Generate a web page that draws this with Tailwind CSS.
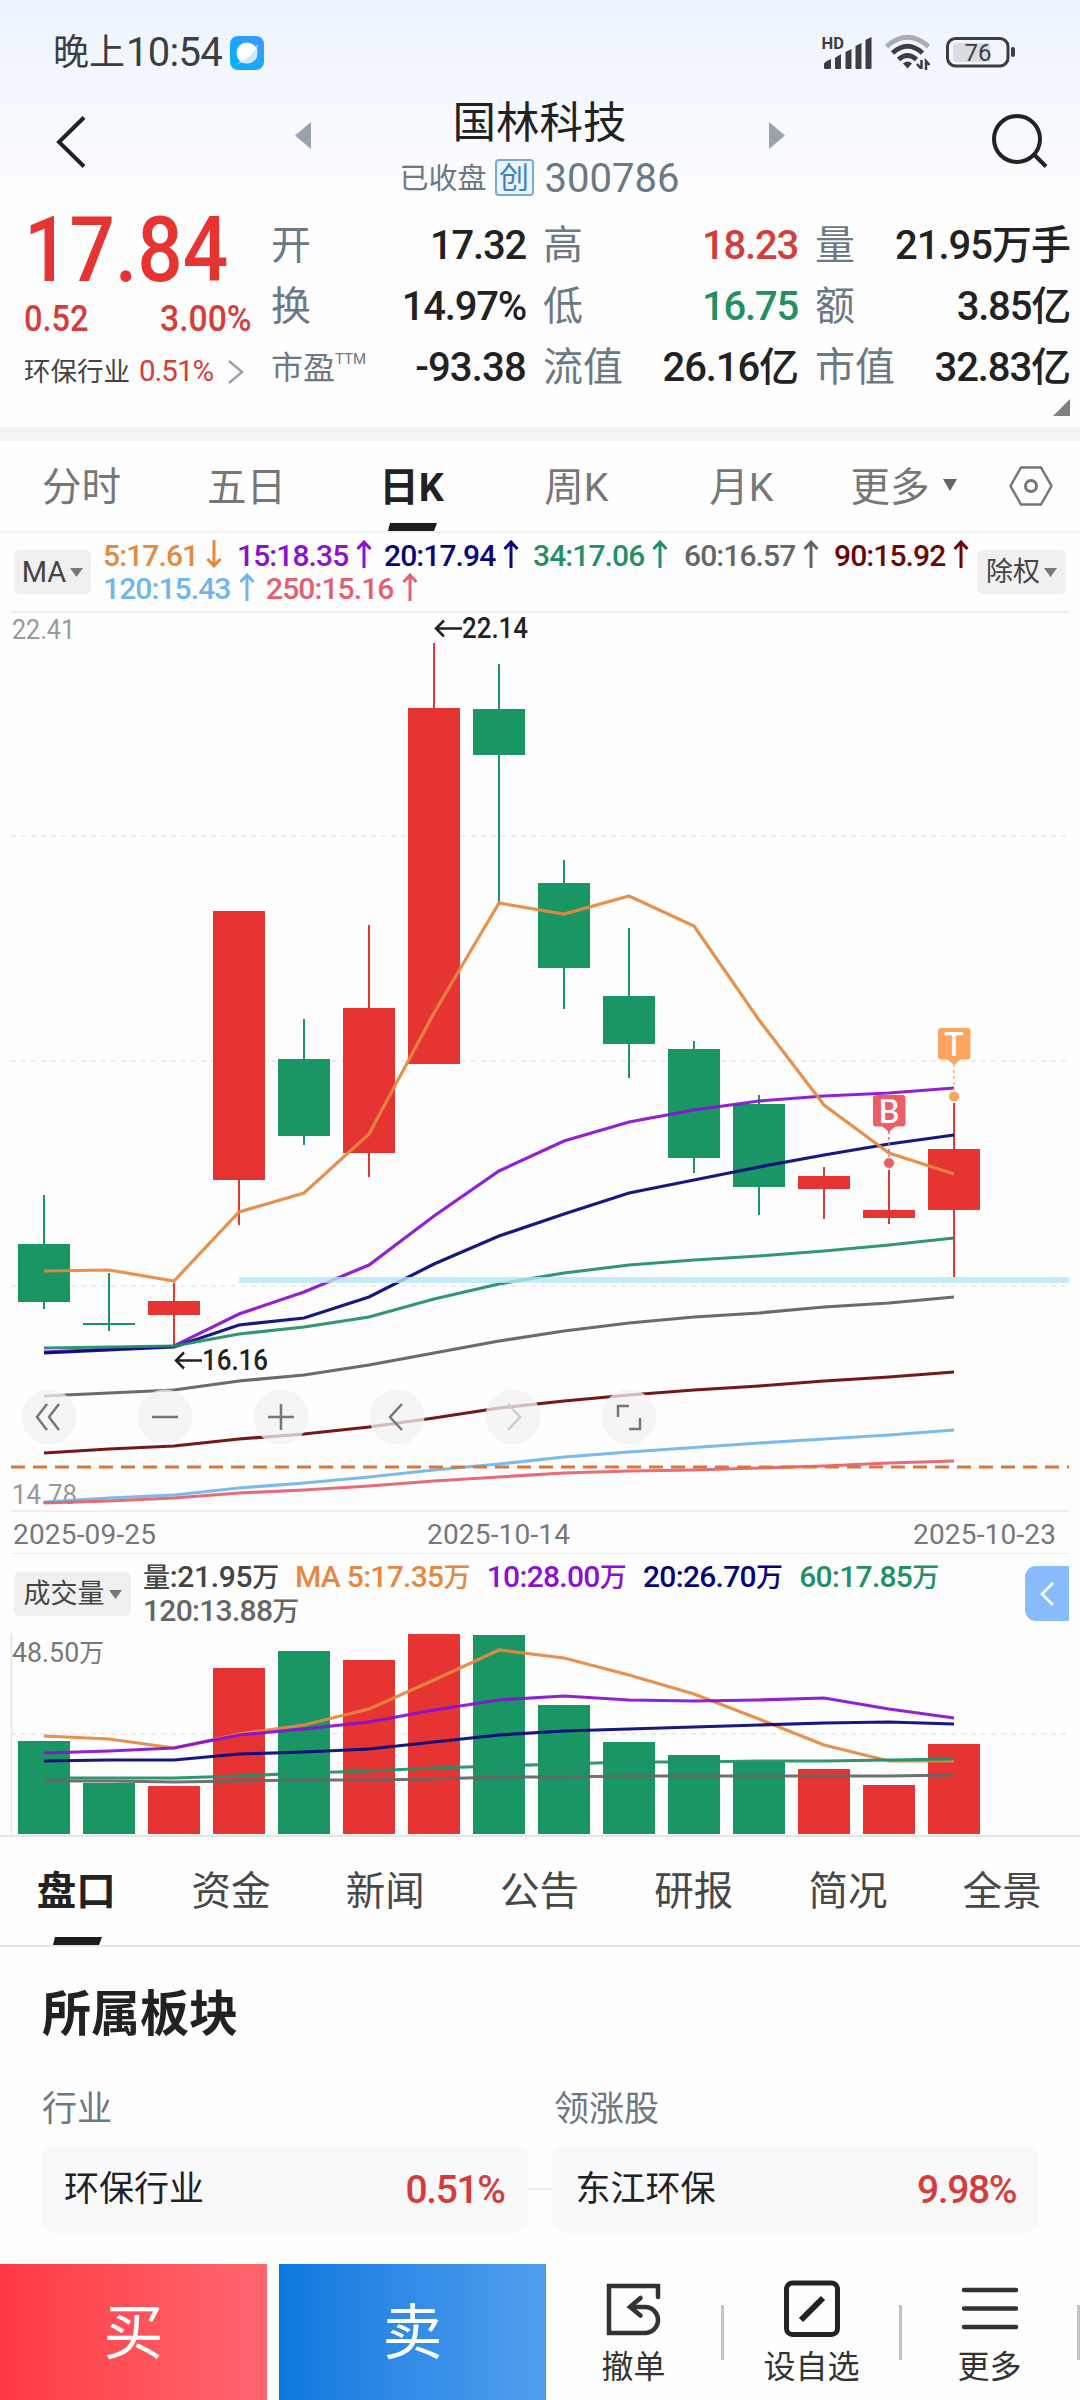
<!DOCTYPE html>
<html lang="zh-CN">
<head>
    <meta charset="UTF-8">
    <meta name="viewport" content="width=device-width, initial-scale=1.0">
    <title>国林科技 300786</title>
    <script src="https://cdn.jsdelivr.net/npm/@tailwindcss/browser@4"></script>
</head>
<body class="w-[1080px] h-[2400px] overflow-hidden bg-[#fefefe] text-[#222] leading-none whitespace-nowrap font-['Roboto','Noto_Sans_CJK_SC',sans-serif]">
    <div class="flex flex-col h-[2400px]">

        <!-- Top: status bar, title, quote -->
        <div class="h-[427px] bg-linear-to-b from-[#edf4fe] to-[#fefefe] to-50% shrink-0">
            <div class="h-[104px] flex items-center justify-between pl-[53px] pr-[64px] text-[#3c3e42]">
                <div class="flex items-center pt-px">
                    <span class="text-[36px]">晚上</span>
                    <span class="text-[40px] ml-px tracking-[-0.7px]">10:54</span>
                    <svg class="ml-[8px]" width="34" height="34" viewBox="0 0 34 34">
                        <defs>
                            <linearGradient id="appBg" x1="0" y1="1" x2="1" y2="0"><stop offset="0" stop-color="#00b4ff"/><stop offset="1" stop-color="#3f97fb"/></linearGradient>
                        </defs>
                        <rect width="34" height="34" rx="8" fill="url(#appBg)"/>
                        <path d="M7 28 L28 8 L26 23 Z" fill="#8fd0ff"/>
                        <circle cx="17" cy="17" r="10.5" fill="#fff"/>
                        <path d="M26 12 A10.5 10.5 0 0 1 11 25.500 Q21 21 26 12Z" fill="#cfe6ff"/>
                    </svg>
                </div>
                <div class="flex items-center">
                    <svg width="51" height="34" viewBox="822 35 51 34" class="mr-3" fill="#3c3e42">
                        <text x="821.500" y="48.500" font-size="16.500" font-weight="700">HD</text>
                        <path d="M824 68v-4q0-2 7-5v9q0 1-1 1h-5q-1 0-1-1zM835 68V58l6-4v14q0 1-1 1h-4q-1 0-1-1zM845.500 68V52l6-3v19q0 1-1 1h-4q-1 0-1-1zM855.500 68V46l6-3v25q0 1-1 1h-4q-1 0-1-1zM865.500 68V40l6-3v31q0 1-1 1h-4q-1 0-1-1z"/>
                    </svg>
                    <svg width="46" height="36" viewBox="885 35 46 36" class="mr-[15px]" fill="none" stroke="#3c3e42" stroke-width="5">
                        <path d="M886.500 47.500Q907.500 29 928.500 47.500" stroke="#a9adb3"/>
                        <path d="M892.500 54Q907.500 40.500 922.500 54"/>
                        <path d="M898.500 60.500Q907.500 52.500 916.500 60.500"/>
                        <path d="M903 64.500q4.500-4 9 0l-4.500 5z" fill="#3c3e42" stroke="none"/>
                        <path d="M921.500 61v9M917 65l4 4.500M926 71v-9l3.500 4" stroke-width="2.500"/>
                    </svg>
                    <svg width="70" height="32" viewBox="946 36 70 32">
                        <rect x="947.500" y="38.500" width="60.500" height="27.500" rx="8" fill="none" stroke="#3c3e42" stroke-width="3"/>
                        <path d="M957 43h33v19h-33q-4 0-4-4v-11q0-4 4-4z" fill="#d9dce1"/>
                        <rect x="1011" y="47" width="4" height="10" rx="2" fill="#3c3e42"/>
                        <text x="978" y="61" font-size="24" text-anchor="middle" fill="#3c3e42">76</text>
                    </svg>
                </div>
            </div>

            <div class="h-[96px] flex items-start justify-between pl-[55px] pr-[31px]">
                <svg class="mt-[10px]" width="32" height="56" viewBox="55 114 32 56" fill="none" stroke="#222" stroke-width="4"><path d="M84 117.500L59 142l25 24.500"/></svg>
                <div class="flex ml-px">
                    <svg class="mt-[18px] mr-[84px]" width="16" height="27" viewBox="0 0 16 27"><path d="M16 0v27L0 13.500z" fill="#9aa3ad"/></svg>
                    <div class="w-[290px] flex flex-col items-center">
                        <div class="text-[43.5px] h-[43px] mt-[-2px]">国林科技</div>
                        <div class="flex items-center h-[40px] mt-[14px] text-[#6b7885]">
                            <span class="text-[29px]">已收盘</span>
                            <span class="ml-2 w-[39px] h-[37px] mt-[-3px] border-2 border-[#7aa9d6] bg-[#edf5fc] rounded-[4px] text-[30px] text-[#3f82c4] flex items-center justify-center">创</span>
                            <span class="ml-[11px] text-[40px]">300786</span>
                        </div>
                    </div>
                    <svg class="mt-[18px] ml-[84px]" width="16" height="27" viewBox="0 0 16 27"><path d="M0 0v27l16-13.500z" fill="#9aa3ad"/></svg>
                </div>
                <svg class="mt-[8px]" width="58" height="58" viewBox="991 112 58 58" fill="none" stroke="#222" stroke-width="4"><circle cx="1017" cy="139" r="23"/><path d="M1034 154.500L1046 166.500"/></svg>
            </div>

            <div class="flex h-[227px] pl-6 pr-[10px]">
                <div class="w-[248px] text-[#e63432]">
                    <div class="text-[90px] font-medium origin-left scale-x-[.89] h-[64px] leading-[64px] mt-[19px] ml-[0px]">17.84</div>
                    <div class="flex justify-between w-[228px] h-[52px] mt-[9px] items-center text-[37px] font-medium text-[#d63c3a]"><span class="origin-left scale-x-[.88]">0.52</span><span class="origin-right scale-x-[.91]">3.00%</span></div>
                    <div class="flex items-center h-[52px] mt-[2px]">
                        <span class="text-[26.5px] text-[#444]">环保行业</span>
                        <span class="text-[29.5px] tracking-[-1px] ml-[9px] text-[#d63c3a]">0.51%</span>
                        <svg class="ml-[14px]" width="18" height="24" viewBox="0 0 18 24" fill="none" stroke="#9aa3ad" stroke-width="2.500"><path d="M2 1l13 11L2 23"/></svg>
                    </div>
                </div>
                <div class="flex-1 grid grid-cols-[254px_254px_254px] grid-rows-[61px_61px_61px] gap-x-[18px] mt-[15px] text-[40px]">
                    <div class="flex items-center justify-between"><span class="text-[#6b7885] ml-[-1px]">开</span><span class="font-medium tracking-[-1.2px]">17.32</span></div>
                    <div class="flex items-center justify-between"><span class="text-[#6b7885] ml-[-1px]">高</span><span class="font-medium tracking-[-1.2px] text-[#d63c3a]">18.23</span></div>
                    <div class="flex items-center justify-between"><span class="text-[#6b7885] ml-[-1px]">量</span><span class="font-medium tracking-[-1px]">21.95万手</span></div>
                    <div class="flex items-center justify-between"><span class="text-[#6b7885] ml-[-1px]">换</span><span class="font-medium tracking-[-1.2px]">14.97%</span></div>
                    <div class="flex items-center justify-between"><span class="text-[#6b7885] ml-[-1px]">低</span><span class="font-medium tracking-[-1.2px] text-[#239063]">16.75</span></div>
                    <div class="flex items-center justify-between"><span class="text-[#6b7885] ml-[-1px]">额</span><span class="font-medium tracking-[-1.2px]">3.85亿</span></div>
                    <div class="flex items-center justify-between"><span class="text-[#6b7885] ml-[-1px] text-[32px] flex items-start">市盈<span class="text-[15px]">TTM</span></span><span class="font-medium tracking-[-0.8px]">-93.38</span></div>
                    <div class="flex items-center justify-between"><span class="text-[#6b7885] ml-[-1px]">流值</span><span class="font-medium tracking-[-1.1px]">26.16亿</span></div>
                    <div class="flex items-center justify-between"><span class="text-[#6b7885] ml-[-1px]">市值</span><span class="font-medium tracking-[-1.1px]">32.83亿</span></div>
                    <div class="col-span-3 flex justify-end pt-px"><svg width="17" height="17"><path d="M17 0v17H0z" fill="#808080"/></svg></div>
                </div>
            </div>
        </div>
        <div class="h-[14px] bg-[#f4f4f4] shrink-0"></div>

        <!-- Period tabs -->
        <div class="h-[92px] shrink-0 flex items-center border-b-2 border-[#f0f0f0] text-[39.5px] text-[#777]">
            <div class="w-[165px] pr-[2px] pt-[3px] text-center">分时</div>
            <div class="w-[165px] pr-[2px] pt-[3px] text-center">五日</div>
            <div class="w-[165px] h-full relative flex items-center justify-center pr-[2px] pt-[3px] font-bold text-[#222]">日K
                <svg class="absolute bottom-0 left-[58px]" width="49" height="8"><path d="M2 0h47l-3 8H0z" fill="#1b1b1b"/></svg>
            </div>
            <div class="w-[165px] pr-[2px] pt-[3px] text-center">周K</div>
            <div class="w-[165px] pr-[2px] pt-[3px] text-center">月K</div>
            <div class="w-[157px] pt-[3px] flex items-center justify-center">更多<svg class="ml-[13px] mt-[-6px]" width="14" height="12"><path d="M0 0h14L7 12z" fill="#666"/></svg></div>
            <svg class="ml-[26px]" width="46" height="42" viewBox="0 0 46 42" fill="none" stroke="#777" stroke-width="2.500"><path d="M13 2.500h20L43.500 21 33 39.500H13L2.500 21z"/><circle cx="23" cy="21" r="5.500" stroke-width="3"/></svg>
        </div>

        <!-- MA legend -->
        <div class="h-[78px] shrink-0 flex pl-[14px] text-[30px]">
            <div class="w-[77px] h-[44px] mt-[17px] rounded-[6px] bg-[#f0f0f0] flex items-center justify-center text-[#444] text-[29px]">MA<svg class="ml-1" width="13" height="9"><path d="M0 0h13L6.500 9z" fill="#777"/></svg></div>
            <div class="w-[886px] pl-[12px] pt-[6px] font-medium tracking-[-0.9px]">
                <div id="maRow1" class="flex h-[33px]"></div>
                <div id="maRow2" class="flex h-[33px]"></div>
            </div>
            <div class="w-[89px] h-[44px] mt-[17px] rounded-[6px] bg-[#f0f0f0] flex items-center justify-center text-[#444] text-[27px]">除权<svg class="ml-1" width="13" height="9"><path d="M0 0h13L6.500 9z" fill="#777"/></svg></div>
        </div>

        <!-- K line chart -->
        <svg id="kline" class="shrink-0 block" width="1080" height="943" viewBox="0 611 1080 943"></svg>

        <!-- Volume legend -->
        <div class="h-[79px] shrink-0 flex pl-[14px] pr-[11px] text-[30px]">
            <div class="w-[117px] h-[44px] mt-[18px] rounded-[6px] bg-[#f0f0f0] flex items-center justify-center text-[#444] text-[27px]">成交量<svg class="ml-1" width="13" height="9"><path d="M0 0h13L6.500 9z" fill="#777"/></svg></div>
            <div class="flex-1 pl-3 pt-[6px] font-medium tracking-[-0.7px] leading-[34px]">
                <div class="flex gap-[17px]">
                    <span class="text-[#444] tracking-[-0.3px]"><span class="text-[27px]">量</span>:21.95<span class="text-[27px]">万</span></span>
                    <span class="text-[#e6883e] -ml-px">MA 5:17.35<span class="text-[27px]">万</span></span>
                    <span class="text-[#8a10d2]">10:28.00<span class="text-[27px]">万</span></span>
                    <span class="text-[#06067c]">20:26.70<span class="text-[27px]">万</span></span>
                    <span class="text-[#1f9068]">60:17.85<span class="text-[27px]">万</span></span>
                </div>
                <div class="text-[#666] mt-[-1px]">120:13.88<span class="text-[27px]">万</span></div>
            </div>
            <div class="w-[44px] h-[55px] mt-3 bg-[#89bbff] rounded-l-[11px] flex items-center justify-center">
                <svg width="14" height="26" viewBox="0 0 14 26" fill="none" stroke="#fff" stroke-width="2.500"><path d="M13 2L2 13l11 11"/></svg>
            </div>
        </div>
        <svg id="volume" class="shrink-0 block" width="1080" height="202" viewBox="0 1633 1080 202"></svg>

        <!-- Info tabs -->
        <div class="h-[112px] shrink-0 grid grid-cols-7 items-center text-center border-y-2 border-[#e6e6e6] text-[39.5px] text-[#484848]">
            <div class="relative h-full flex items-center justify-center pt-[2px] pr-[2px] font-bold text-[#222]">盘口
                <svg class="absolute bottom-0 left-[53px]" width="49" height="8"><path d="M2 0h47l-3 8H0z" fill="#1b1b1b"/></svg>
            </div>
            <div class="pt-[2px] pr-px">资金</div>
            <div class="pt-[2px] pr-px">新闻</div>
            <div class="pt-[2px] pr-px">公告</div>
            <div class="pt-[2px] pr-px">研报</div>
            <div class="pt-[2px] pr-px">简况</div>
            <div class="pt-[2px] pr-px">全景</div>
        </div>

        <!-- Sectors -->
        <div class="h-[317px] shrink-0 px-[41px]">
            <h2 class="text-[49px] font-bold mt-[43px] ml-px h-[50px]">所属板块</h2>
            <div class="grid grid-cols-[487px_487px] gap-x-[25px] mt-[52px] text-[35px] text-[#6b7885]">
                <div class="pl-px">行业</div>
                <div class="pl-px">领涨股</div>
            </div>
            <div class="flex items-center mt-[18px] text-[35px]">
                <div class="w-[487px] h-[88px] rounded-[12px] bg-[#f9f9fc] flex items-center justify-between px-[23px]"><span>环保行业</span><span class="text-[39px] font-medium tracking-[-1.4px] mt-[3px]  text-[#d63c3a]">0.51%</span></div>
                <div class="w-[25px] h-[2px] bg-[#ececec]"></div>
                <div class="w-[487px] h-[88px] rounded-[12px] bg-[#f9f9fc] flex items-center justify-between px-[23px]"><span>东江环保</span><span class="text-[39px] font-medium tracking-[-1.4px] mt-[3px] text-[#d63c3a]">9.98%</span></div>
            </div>
        </div>

        <!-- Bottom actions -->
        <div class="h-[136px] shrink-0 flex">
            <button class="w-[267px] mr-3 pt-1 bg-linear-to-r from-[#ff3843] to-[#ff6670] text-white text-[60px]">买</button>
            <button class="w-[267px] pt-1 bg-linear-to-r from-[#0878de] to-[#4f9fee] text-white text-[60px]">卖</button>
            <div class="flex-1 grid grid-cols-3 text-[32px] text-[#333]">
                <div class="flex items-center">
                    <div class="flex-1 flex flex-col items-center gap-[9px] pb-px">
                        <svg width="58" height="62" viewBox="608 2281 58 62" fill="none" stroke="#333" stroke-width="4.500" stroke-linecap="round"><path d="M661 2298v-11h-49v47h36a13 13 0 0 0 0-26h-14"/><path d="M643.500 2299l-10.500 9 10.500 8.500"/></svg>
                        <span>撤单</span>
                    </div>
                    <div class="w-[3px] h-[55px] bg-[#c4c4c4]"></div>
                </div>
                <div class="flex items-center">
                    <div class="flex-1 flex flex-col items-center gap-[9px] pb-px">
                        <svg width="58" height="62" viewBox="784 2281 58 62" fill="none" stroke="#222" stroke-width="5"><rect x="787.500" y="2284" width="51" height="51.500" rx="6"/><path d="M802 2321l22-22" stroke-width="6"/></svg>
                        <span>设自选</span>
                    </div>
                    <div class="w-[3px] h-[55px] bg-[#c4c4c4]"></div>
                </div>
                <div class="flex items-center">
                    <div class="flex-1 flex flex-col items-center gap-[9px] pb-px">
                        <svg width="58" height="62" viewBox="962 2281 58 62" stroke="#333" stroke-width="4.500" stroke-linecap="round"><path d="M965 2291h52M965 2309.500h52M965 2328h52"/></svg>
                        <span>更多</span>
                    </div>
                    <div class="w-[3px] h-[55px] bg-[#c4c4c4]"></div>
                </div>
            </div>
        </div>
    </div>

    <script>
        const RED = '#e63432', GREEN = '#1a9664';
        const ORANGE = '#e6883e', PURPLE = '#8a10d2', NAVY = '#06067c', TEAL = '#1f9068';

        // MA legend
        function legend(id, items) {
            document.getElementById(id).innerHTML = items.map(([text, color, w, up]) =>
                `<div class="flex items-start shrink-0" style="color:${color};width:${w}px"><span class="mt-[2px]">${text}</span>
                <svg class="ml-2 mt-px" width="16" height="28" viewBox="0 0 16 28" fill="none" stroke="${color}" stroke-width="3"><path d="${up ? 'M8 28V2M1.500 9L8 2l6.500 7' : 'M8 0v26M1.500 19L8 26l6.500-7'}"/></svg></div>`
            ).join('');
        }
        legend('maRow1', [
            ['5:17.61', ORANGE, 134, false], ['15:18.35', PURPLE, 147, true], ['20:17.94', NAVY, 149, true],
            ['34:17.06', TEAL, 151, true], ['60:16.57', '#666', 150, true], ['90:15.92', '#6c0606', 147, true]
        ]);
        legend('maRow2', [['120:15.43', '#70b6ea', 163, true], ['250:15.16', '#e5606e', 164, true]]);

        const cx = i => 44 + i * 65;
        const line = (ys, color) => `<polyline points="${ys.map((y, i) => cx(i) + ',' + y).join(' ')}" fill="none" stroke="${color}" stroke-width="3.200" stroke-opacity=".93"/>`;
        const hr = y => `<path d="M11 ${y}H1069" stroke="#efefef" stroke-width="2"/>`;
        const dash = y => `<path d="M11 ${y}H1069" stroke="#ececec" stroke-width="2" stroke-dasharray="5 5"/>`;
        const label = (x, y, t, color, size, extra = '') => `<text x="${x}" y="${y}" fill="${color}" font-size="${size}" ${extra}>${t}</text>`;

        // color, high, body top, body bottom, low
        const candles = [
            [GREEN, 1195, 1244, 1302, 1309], [GREEN, 1273, 1323, 1325, 1331], [RED, 1283, 1301, 1315, 1345],
            [RED, 911, 911, 1180, 1225], [GREEN, 1019, 1059, 1136, 1145], [RED, 925, 1008, 1153, 1177],
            [RED, 643, 708, 1064, 1064], [GREEN, 664, 709, 755, 905], [GREEN, 860, 883, 968, 1009],
            [GREEN, 928, 996, 1044, 1078], [GREEN, 1041, 1049, 1158, 1173], [GREEN, 1095, 1104, 1187, 1215],
            [RED, 1167, 1176, 1189, 1219], [RED, 1170, 1210, 1218, 1224], [RED, 1103, 1149, 1210, 1277]
        ];
        let s = hr(612) + dash(836) + dash(1061) + dash(1286) + hr(1511) + hr(1554);
        s += label(12, 639, '22.41', '#999', 28, 'textLength="63" lengthAdjust="spacingAndGlyphs"');
        s += label(12, 1504, '14.78', '#999', 28, 'textLength="65" lengthAdjust="spacingAndGlyphs"');
        candles.forEach(([c, h, t, b, l], i) => {
            s += `<path d="M${cx(i)} ${h}V${l}" stroke="${c}" stroke-width="2"/><rect x="${cx(i) - 26}" y="${t}" width="52" height="${b - t}" fill="${c}"/>`;
        });
        s += line([1396, 1393, 1390, 1381, 1375, 1365, 1353, 1341, 1331, 1323, 1317, 1313, 1307, 1303, 1297], '#606060');
        s += line([1453, 1449, 1446, 1439, 1434, 1427, 1418, 1408, 1401, 1395, 1390, 1386, 1381, 1377, 1372], '#6c0606');
        s += line([1502, 1498, 1495, 1488, 1483, 1477, 1470, 1464, 1457, 1452, 1447.5, 1443, 1439, 1435, 1430], '#70b6ea');
        s += line([1503, 1501, 1498, 1493, 1490, 1486, 1481, 1477, 1473, 1471, 1470, 1468, 1466, 1463, 1461], '#e5606e');
        s += line([1352, 1349, 1346, 1314, 1292, 1265, 1216, 1171, 1141, 1122, 1110, 1101, 1096, 1093, 1088], PURPLE);
        s += line([1353, 1350, 1347, 1325, 1318, 1297, 1264, 1236, 1214, 1193, 1180, 1167, 1155, 1144, 1135], NAVY);
        s += line([1348, 1347, 1346, 1334, 1327, 1317, 1299, 1284, 1273, 1265, 1260, 1256, 1251, 1245, 1238], TEAL);
        s += line([1271, 1270, 1281, 1212, 1193, 1134, 1013, 903, 914, 896, 926, 1020, 1105, 1153, 1174], ORANGE);
        s += '<rect x="239" y="1277" width="830" height="6" fill="#b4e6fb" fill-opacity=".8"/>';
        s += '<path d="M11 1467H1069" stroke="#dd7536" stroke-width="3" stroke-dasharray="14 8"/>';
        // high / low marks
        s += '<path d="M462 628.500H436M444 620.500l-8 8 8 8M202 1360.500H176M184 1352.500l-8 8 8 8" fill="none" stroke="#222" stroke-width="2.500"/>';
        s += label(462, 638, '22.14', '#222', 29, 'textLength="66" lengthAdjust="spacingAndGlyphs" font-weight="500"');
        s += label(202, 1370, '16.16', '#222', 29, 'textLength="66" lengthAdjust="spacingAndGlyphs" font-weight="500"');
        // trade flags
        const flag = (x, y, color, t, dotY) => `<path d="M${x} ${y + 36}V${dotY - 6}" stroke="${color}" stroke-width="2" stroke-dasharray="3 3" stroke-opacity=".7"/>
            <rect x="${x - 16}" y="${y}" width="32.500" height="31.500" rx="3" fill="${color}"/><path d="M${x - 7} ${y + 31}h14l-7 6z" fill="${color}"/>
            <circle cx="${x}" cy="${dotY}" r="5.500" fill="${color}" stroke="#fefefe" stroke-width="1"/>
            <text x="${x}" y="${y + 27.5}" fill="#fff" font-size="32" font-family="Lato" font-weight="600" text-anchor="middle">${t}</text>`;
        s += flag(889, 1095, '#ea5f66', 'B', 1163) + flag(954, 1028, '#fda560', 'T', 1096.5);
        // nav buttons
        const icons = ['M47 1404l-10 13 10 13M59 1404l-10 13 10 13', 'M152 1417h26', 'M268 1417h26M281 1404v26',
            'M402 1404l-12 13 12 13', 'M508 1404l12 13-12 13', 'M618 1417v-11h11M629 1429h11v-11'];
        icons.forEach((d, i) => {
            s += `<circle cx="${49 + i * 116}" cy="1417" r="27.500" fill="#f1f1f1" fill-opacity=".75"/><path d="${d}" fill="none" stroke="${i === 4 ? '#ccc' : '#777'}" stroke-width="2.500"/>`;
        });
        [[13, '2025-09-25'], [427, '2025-10-14'], [913, '2025-10-23']].forEach(([x, t]) => {
            s += label(x, 1544, t, '#777', 28, 'textLength="143"');
        });
        document.getElementById('kline').innerHTML = s;

        // volume bars
        const vols = [1741, 1783, 1786, 1668, 1651, 1660, 1634, 1635, 1705, 1742, 1755, 1762, 1769, 1785, 1744];
        let v = '<path d="M11.500 1633V1835" stroke="#e4e4e4" stroke-width="1.500"/>' + dash(1734);
        v += label(12, 1662, '48.50<tspan font-size="26">万</tspan>', '#777', 28, 'textLength="92" lengthAdjust="spacingAndGlyphs"');
        vols.forEach((y, i) => {
            v += `<rect x="${cx(i) - 26}" y="${y}" width="52" height="${1834 - y}" fill="${candles[i][0]}"/>`;
        });
        v += line([1736, 1739, 1748, 1734, 1725, 1709, 1680, 1650, 1658, 1675, 1694, 1719, 1745, 1761, 1761], ORANGE);
        v += line([1753, 1751, 1748, 1735, 1729, 1722, 1710, 1700, 1696, 1700, 1701, 1700, 1698, 1709, 1718], PURPLE);
        v += line([1761, 1760, 1760, 1754, 1752, 1749, 1742, 1735, 1731, 1729, 1727, 1725, 1723, 1722, 1724], NAVY);
        v += line([1778, 1778, 1778, 1776, 1773, 1771, 1768, 1766, 1764, 1762, 1762, 1761, 1761, 1760, 1759], TEAL);
        v += line([1781, 1781, 1782, 1781, 1780, 1780, 1779, 1777, 1777, 1776, 1776, 1776, 1776, 1776, 1775], '#666');
        document.getElementById('volume').innerHTML = v;
    </script>
</body>
</html>
